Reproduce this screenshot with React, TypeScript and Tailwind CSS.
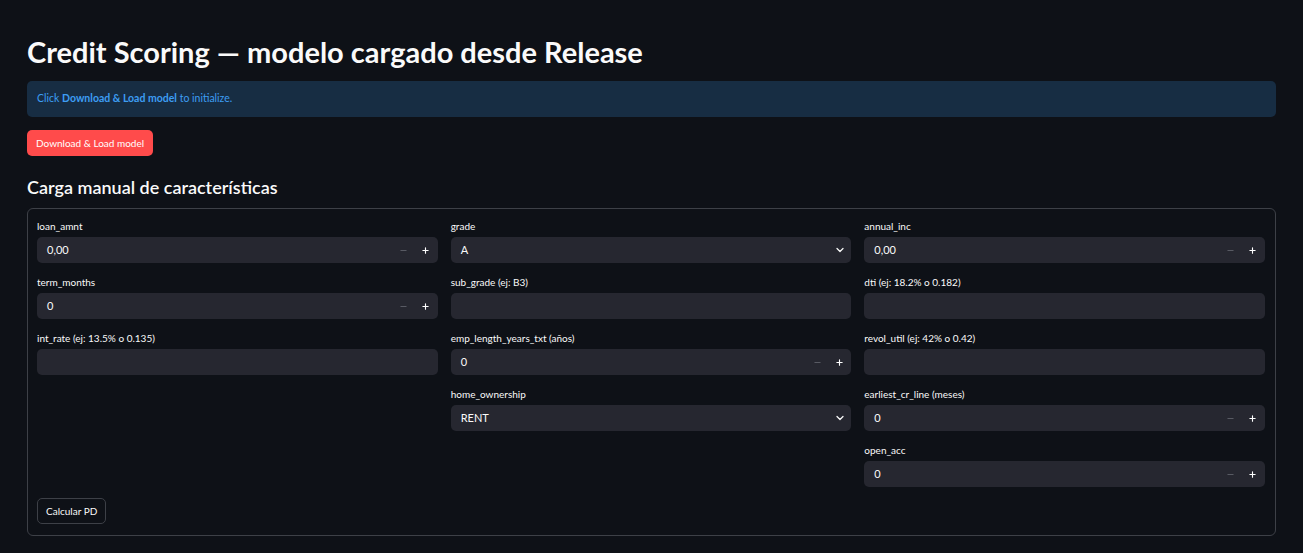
import { ChevronDown, Minus, Plus } from "lucide-react";

type Field =
  | { label: string; kind: "number"; value: string }
  | { label: string; kind: "text" }
  | { label: string; kind: "select"; value: string };

const columns: Field[][] = [
  [
    { label: "loan_amnt", kind: "number", value: "0,00" },
    { label: "term_months", kind: "number", value: "0" },
    { label: "int_rate (ej: 13.5% o 0.135)", kind: "text" },
  ],
  [
    { label: "grade", kind: "select", value: "A" },
    { label: "sub_grade (ej: B3)", kind: "text" },
    { label: "emp_length_years_txt (años)", kind: "number", value: "0" },
    { label: "home_ownership", kind: "select", value: "RENT" },
  ],
  [
    { label: "annual_inc", kind: "number", value: "0,00" },
    { label: "dti (ej: 18.2% o 0.182)", kind: "text" },
    { label: "revol_util (ej: 42% o 0.42)", kind: "text" },
    { label: "earliest_cr_line (meses)", kind: "number", value: "0" },
    { label: "open_acc", kind: "number", value: "0" },
  ],
];

function Input({ field }: { field: Field }) {
  return (
    <div className="flex flex-col">
      <label className="h-[14px] text-[10px] leading-[14px] text-[#fafafa]">{field.label}</label>
      <div className="mt-[4px] flex h-[26px] items-center rounded-[5px] bg-[#262730] pl-[10px] text-[11px] text-[#fafafa]">
        <span className="flex-1">{field.kind === "text" ? "" : field.value}</span>
        {field.kind === "number" && (
          <div className="mr-[1px] flex items-center">
            <span className="flex w-[22px] justify-center text-[#5c5e66]">
              <Minus size={9} strokeWidth={2.5} />
            </span>
            <span className="flex w-[22px] justify-center text-white">
              <Plus size={9} strokeWidth={3} />
            </span>
          </div>
        )}
        {field.kind === "select" && (
          <span className="mr-[4px] flex w-[14px] justify-center text-[#fafafa]">
            <ChevronDown size={12} strokeWidth={2.5} />
          </span>
        )}
      </div>
    </div>
  );
}

export default function App() {
  return (
    <div className="min-h-[553px] bg-[#0e1117] px-[27px] pt-[33px] font-['Lato','Noto_Sans',sans-serif] text-[#fafafa]">
      <h1 className="text-[29px] leading-[38px] font-bold">Credit Scoring — modelo cargado desde Release</h1>

      <div className="mt-[10px] flex h-[36px] items-center rounded-[5px] bg-[#172d43] px-[10px] text-[10.5px] text-[#3d9df3]">
        <span>
          Click <b className="font-bold">Download &amp; Load model</b> to initialize.
        </span>
      </div>

      <button className="mt-[13px] h-[26px] rounded-[5px] bg-[#ff4b4b] px-[9px] text-[10px] text-white">
        Download &amp; Load model
      </button>

      <h2 className="mt-[18px] text-[18px] leading-[26px] font-semibold">Carga manual de características</h2>

      <div className="mt-[8px] rounded-[6px] border border-[#3d4047] pt-[10px] pr-[10px] pb-[11px] pl-[9px]">
        <div className="grid grid-cols-3 gap-x-[13px]">
          {columns.map((col, i) => (
            <div key={i} className="flex flex-col gap-[12px]">
              {col.map((f) => (
                <Input key={f.label} field={f} />
              ))}
            </div>
          ))}
        </div>
        <button className="mt-[11px] h-[26px] rounded-[5px] border border-[#3d4047] bg-[#0e1117] px-[8px] text-[10px] text-[#fafafa]">
          Calcular PD
        </button>
      </div>
    </div>
  );
}
